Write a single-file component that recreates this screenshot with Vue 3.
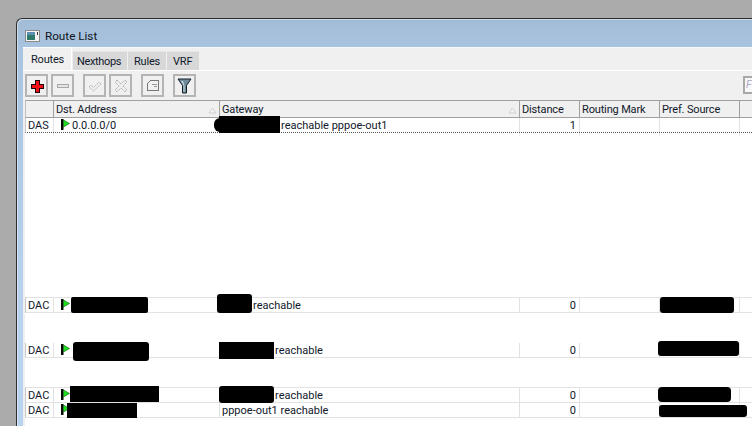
<script setup>
const cols = ['', 'Dst. Address', 'Gateway', 'Distance', 'Routing Mark', 'Pref. Source', '']
const tabs = [
  { name: 'Routes', active: true },
  { name: 'Nexthops' },
  { name: 'Rules' },
  { name: 'VRF' }
]
const rows = [
  { id: 1, flags: 'DAS', dst: '0.0.0.0/0', gw: 'reachable pppoe-out1', gwPad: 59, dist: '1', cls: 'first', gap: 0,
    marks: [[214, 0, 12, 14, 7], [219, -2, 61, 17, 0]] },
  { id: 2, flags: 'DAC', dst: '', gw: 'reachable', gwPad: 31, dist: '0', cls: 'topline', gap: 164,
    marks: [[71, -1, 77, 16, 2], [217, -4, 35, 19, 3], [660, -1, 74, 16, 3]] },
  { id: 3, flags: 'DAC', dst: '', gw: 'reachable', gwPad: 53, dist: '0', cls: '', gap: 30,
    marks: [[73, -1, 76, 19, 3], [219, -1, 55, 17, 0], [658, -2, 81, 15, 3]] },
  { id: 4, flags: 'DAC', dst: '', gw: 'reachable', gwPad: 53, dist: '0', cls: 'topline', gap: 29,
    marks: [[70, -2, 89, 16, 0], [219, -2, 55, 17, 3], [658, -1, 73, 15, 4]] },
  { id: 5, flags: 'DAC', dst: '', gw: 'pppoe-out1 reachable', gwPad: 0, dist: '0', cls: '', gap: 0,
    marks: [[67, 0, 70, 15, 0], [659, 2, 88, 12, 3]] }
]
function markStyle(m) {
  return { left: m[0] - 26 + 'px', top: m[1] + 'px', width: m[2] + 'px', height: m[3] + 'px', borderRadius: m[4] + 'px' }
}
function rowStyle(r) {
  return { marginTop: r.gap + 'px' }
}
</script>

<template>
  <div class="page">
    <div class="window">
      <div class="titlebar">
        <svg class="winicon" width="15" height="12" viewBox="0 0 15 12">
          <rect x="0.5" y="0.5" width="14" height="11" fill="#f4f4f4" stroke="#8a8a8a" />
          <rect x="2" y="2" width="8" height="8" fill="#2f7a6a" />
          <rect x="2" y="2" width="8" height="3" fill="#5d8fb0" />
          <rect x="12" y="2" width="1" height="3" fill="#333" />
        </svg>
        <span class="title">Route List</span>
      </div>
      <div class="tabs">
        <div v-for="t in tabs" :key="t.name" class="tab" :class="{ active: t.active }">{{ t.name }}</div>
      </div>
      <div class="panel">
        <div class="toolbar">
          <button class="tb">
            <svg width="14" height="14" viewBox="0 0 14 14" shape-rendering="crispEdges"><path d="M5 1h4v4h4v4H9v4H5V9H1V5h4z" fill="#f0101a" stroke="#200606" stroke-width="1" /></svg>
          </button>
          <button class="tb">
            <svg width="14" height="14" viewBox="0 0 14 14" shape-rendering="crispEdges"><rect x="1.500" y="5.500" width="11" height="3" fill="#e4e4e4" stroke="#a8a8a8" /></svg>
          </button>
          <button class="tb gap">
            <svg width="16" height="14" viewBox="0 0 16 14"><path d="M2 8l2-2 2.500 2.500L12 3l2 2-7.500 7z" fill="#eee" stroke="#b4b4b4" stroke-dasharray="1.500 .7" /></svg>
          </button>
          <button class="tb">
            <svg width="14" height="14" viewBox="0 0 14 14"><path d="M3 1l4 4 4-4 2 2-4 4 4 4-2 2-4-4-4 4-2-2 4-4-4-4z" fill="#eee" stroke="#b0b0b0" stroke-dasharray="1.500 .7" /></svg>
          </button>
          <button class="tb gap">
            <svg width="14" height="13" viewBox="0 0 14 13" shape-rendering="crispEdges"><path d="M1.500 4.500l3-3h8v10h-11z" fill="#f0f0f0" stroke="#777" /><path d="M6 5h5M8 7.500h3" stroke="#999" /></svg>
          </button>
          <button class="tb gap">
            <svg width="15" height="16" viewBox="0 0 15 16"><path d="M1 1h13L9.500 7.500V15h-4V7.500z" fill="#6f8a9a" stroke="#101c26" /><path d="M4 3h2l1.500 5v6H6.500V7.500z" fill="#c9d6de" /></svg>
          </button>
          <div class="find"><span>F</span></div>
        </div>
        <div class="list">
          <div class="row head">
            <div v-for="(c, i) in cols" :key="i" class="hcell">
              <span>{{ c }}</span>
              <svg v-if="i === 1 || i === 2" class="sort" width="9" height="7" viewBox="0 0 9 7"><path d="M4.500 1L8 6H1z" fill="#f4f4f4" stroke="#d0d0d0" /></svg>
            </div>
          </div>
          <div v-for="r in rows" :key="r.id" class="row data" :class="r.cls" :style="rowStyle(r)">
            <div class="cell">{{ r.flags }}</div>
            <div class="cell dst">
              <svg class="flag" width="9" height="11" viewBox="0 0 9 11"><rect x="0" y="0" width="2.500" height="11" fill="#050a05" /><path d="M2.500 1L8.500 4.500 2.500 8z" fill="#1fe01f" stroke="#0d5a0d" stroke-width=".6" /></svg>
              <span>{{ r.dst }}</span>
            </div>
            <div class="cell"><span class="gw" :style="{ marginLeft: r.gwPad + 'px' }">{{ r.gw }}</span></div>
            <div class="cell num">{{ r.dist }}</div>
            <div class="cell"></div>
            <div class="cell"></div>
            <div class="cell"></div>
            <i v-for="(m, k) in r.marks" :key="k" class="mark" :style="markStyle(m)"></i>
          </div>
        </div>
      </div>
    </div>
  </div>
</template>

<style scoped>
.page {
  width: 752px;
  height: 426px;
  overflow: hidden;
  background: #ababab;
  padding: 18px 0 0 16px;
  box-sizing: border-box;
  font-family: Roboto, "Liberation Sans", Arial, sans-serif;
  font-size: 11px;
  color: #10182a;
}
.window {
  width: 760px;
  height: 420px;
  box-sizing: border-box;
  border: 1px solid #2e2e2e;
  border-right: 0;
  border-bottom: 0;
  border-radius: 6px 0 0 0;
  padding: 0 0 0 6px;
  background: linear-gradient(180deg, #a3bcd6 0, #a9c4e0 30px, #b9d3ee 300px);
  box-shadow: inset 1px 1px 0 rgba(255, 255, 255, 0.45);
}
.titlebar {
  height: 28px;
  display: flex;
  align-items: center;
  gap: 5px;
  padding: 6px 0 0 2px;
  box-sizing: border-box;
}
.winicon { flex: none; }
.title { font-size: 11.700px; color: #0e1420; }
.tabs {
  display: flex;
  align-items: flex-end;
  height: 22px;
  gap: 1px;
  background: #f0f0f0;
  border-top: 1px solid #f8f8f8;
}
.tab {
  height: 19px;
  line-height: 20px;
  box-sizing: border-box;
  padding-left: 6px;
  background: #d8d8d8;
  border-top: 1px solid #e6e6e6;
  letter-spacing: -0.2px;
  white-space: nowrap;
}
.tab:nth-child(1) { width: 49px; padding-left: 8px; }
.tab:nth-child(2) { width: 54px; padding-left: 4px; letter-spacing: -0.35px; }
.tab:nth-child(3) { width: 38px; }
.tab:nth-child(4) { width: 32px; }
.tab.active {
  height: 23px;
  line-height: 24px;
  margin-top: -1px;
  background: #f0f0f0;
  border-top: 1px solid #fff;
  border-right: 1px solid #fff;
}
.panel {
  background: #f0f0f0;
  border-top: 1px solid #fff;
  height: 360px;
  padding-left: 2px;
}
.toolbar {
  height: 29px;
  display: flex;
  align-items: flex-start;
  gap: 3px;
  padding-top: 3px;
  box-sizing: border-box;
}
.tb {
  width: 23px;
  height: 23px;
  padding: 0;
  box-sizing: border-box;
  background: #f0f0f0;
  border: 2px solid #b4b4b4;
  display: flex;
  align-items: center;
  justify-content: center;
}
.tb.gap { margin-left: 6px; }
.find {
  margin-left: auto;
  margin-right: 13px;
  margin-top: 2px;
  width: 20px;
  height: 18px;
  box-sizing: border-box;
  border: 2px solid #a8a8a8;
  background: #f8f8f8;
  padding-left: 1px;
  color: #b0a8c8;
  font-size: 11px;
  font-style: italic;
  line-height: 14px;
}
.list { background: #fff; height: 330px; }
.row {
  display: grid;
  grid-template-columns: 28px 166px 300px 60px 80px 80px 1fr;
  position: relative;
}
.head {
  height: 18px;
  background: #f0f0f0;
  border-top: 1px solid #a0a0a0;
  border-bottom: 1px solid #a0a0a0;
  border-left: 1px solid #c0c0c0;
  box-sizing: border-box;
}
.hcell {
  border-right: 1px solid #a0a0a0;
  padding-left: 2px;
  line-height: 16px;
  height: 16px;
  position: relative;
  white-space: nowrap;
  letter-spacing: -0.15px;
}
.hcell span { display: block; padding-top: 1px; }
.sort { position: absolute; right: 2px; top: 6px; }
.data {
  height: 15px;
  line-height: 16px;
  box-sizing: border-box;
  border-bottom: 1px solid #e2e2e2;
  border-left: 1px solid #c8c8c8;
}
.data.first { height: 15px; border-bottom: 1px dotted #555; background: #fff; }
.data.topline { height: 16px; border-top: 1px solid #e2e2e2; }
.cell {
  border-right: 1px solid #e2e2e2;
  padding: 0 2px;
  white-space: nowrap;
  min-width: 0;
  position: relative;
  height: 14px;
}
.first .cell::after {
  content: "";
  position: absolute;
  right: -1px;
  top: 15px;
  width: 1px;
  height: 3px;
  background: #ececec;
}
.dst { display: flex; align-items: flex-start; gap: 2px; padding-left: 7px; }
.flag { flex: none; margin-top: 1px; }
.num { text-align: right; padding-right: 3px; }
.mark { position: absolute; background: #000; display: block; }
</style>
